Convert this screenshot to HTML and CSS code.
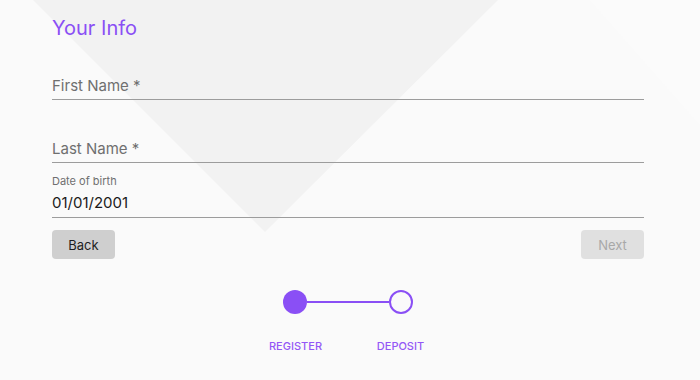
FILE: index.html
```html
<!DOCTYPE html>
<html>
<head>
<meta charset="utf-8">
<link rel="stylesheet" href="styles.css">
</head>
<body>
<div class="bg-tri"></div>
<div class="bg-right"></div>
<main class="form">
  <h1 class="title">Your Info</h1>
  <div class="field field-first"><span class="placeholder">First Name *</span></div>
  <div class="field field-last"><span class="placeholder">Last Name *</span></div>
  <div class="field field-dob">
    <span class="small-label">Date of birth</span>
    <span class="value">01/01/2001</span>
  </div>
  <div class="actions">
    <button class="btn btn-back">Back</button>
    <button class="btn btn-next">Next</button>
  </div>
  <div class="stepper">
    <div class="track">
      <span class="dot dot-filled"></span>
      <span class="line"></span>
      <span class="dot dot-empty"></span>
    </div>
    <div class="labels">
      <span class="step-label">REGISTER</span>
      <span class="step-label">DEPOSIT</span>
    </div>
  </div>
</main>
</body>
</html>
```

FILE: styles.css
```css
html, body {
  margin: 0;
  padding: 0;
}
body {
  width: 700px;
  height: 380px;
  background: #fafafa;
  font-family: "Inter", "Noto Sans", sans-serif;
  position: relative;
  overflow: hidden;
}
.bg-tri {
  position: absolute;
  left: 0;
  top: 0;
  width: 700px;
  height: 380px;
  background: #f2f2f2;
  clip-path: polygon(33px 0, 498px 0, 265px 232px);
}
.bg-right {
  position: absolute;
  left: 0;
  top: 0;
  width: 700px;
  height: 380px;
  background: #fbfbfb;
  clip-path: polygon(590px 0, 700px 0, 700px 125px);
}
.form {
  position: relative;
  padding: 0 56px 0 52px;
  display: flex;
  flex-direction: column;
}
.title {
  margin: 0;
  height: 57px;
  line-height: 56px;
  font-size: 20px;
  font-weight: 400;
  color: #8a4ff5;
}
.field {
  border-bottom: 1px solid #9c9c9c;
  display: flex;
  flex-direction: column;
  justify-content: flex-end;
  box-sizing: border-box;
}
.placeholder {
  font-size: 15px;
  line-height: 20px;
  color: #6f6f6f;
}
.field-first {
  height: 43px;
  padding-bottom: 3px;
}
.field-last {
  height: 63px;
  padding-bottom: 3px;
}
.field-dob {
  height: 55px;
  padding-bottom: 4px;
}
.small-label {
  font-size: 11px;
  line-height: 14px;
  color: #6f6f6f;
}
.value {
  font-size: 15px;
  line-height: 20px;
  margin-top: 5px;
  color: #1a1a1a;
}
.actions {
  display: flex;
  justify-content: space-between;
  margin-top: 12px;
}
.btn {
  width: 63px;
  height: 29px;
  border: none;
  border-radius: 4px;
  font-family: inherit;
  font-size: 13px;
  padding: 0;
}
.btn-back {
  background: #cfcfcf;
  color: #1e1e1e;
}
.btn-next {
  background: #e0e0e0;
  color: #a8a8a8;
}
.stepper {
  display: flex;
  flex-direction: column;
  align-items: center;
  margin-top: 31px;
}
.track {
  display: flex;
  align-items: center;
}
.dot {
  width: 24px;
  height: 24px;
  border-radius: 50%;
  box-sizing: border-box;
}
.dot-filled {
  background: #8a4ff5;
}
.dot-empty {
  border: 2px solid #8a4ff5;
  background: #fafafa;
}
.line {
  width: 82px;
  height: 2px;
  background: #8a4ff5;
}
.labels {
  display: flex;
  gap: 29px;
  margin-top: 25px;
}
.step-label {
  font-size: 11px;
  font-weight: 500;
  line-height: 14px;
  color: #9457f6;
  width: 76px;
  text-align: center;
}
```
